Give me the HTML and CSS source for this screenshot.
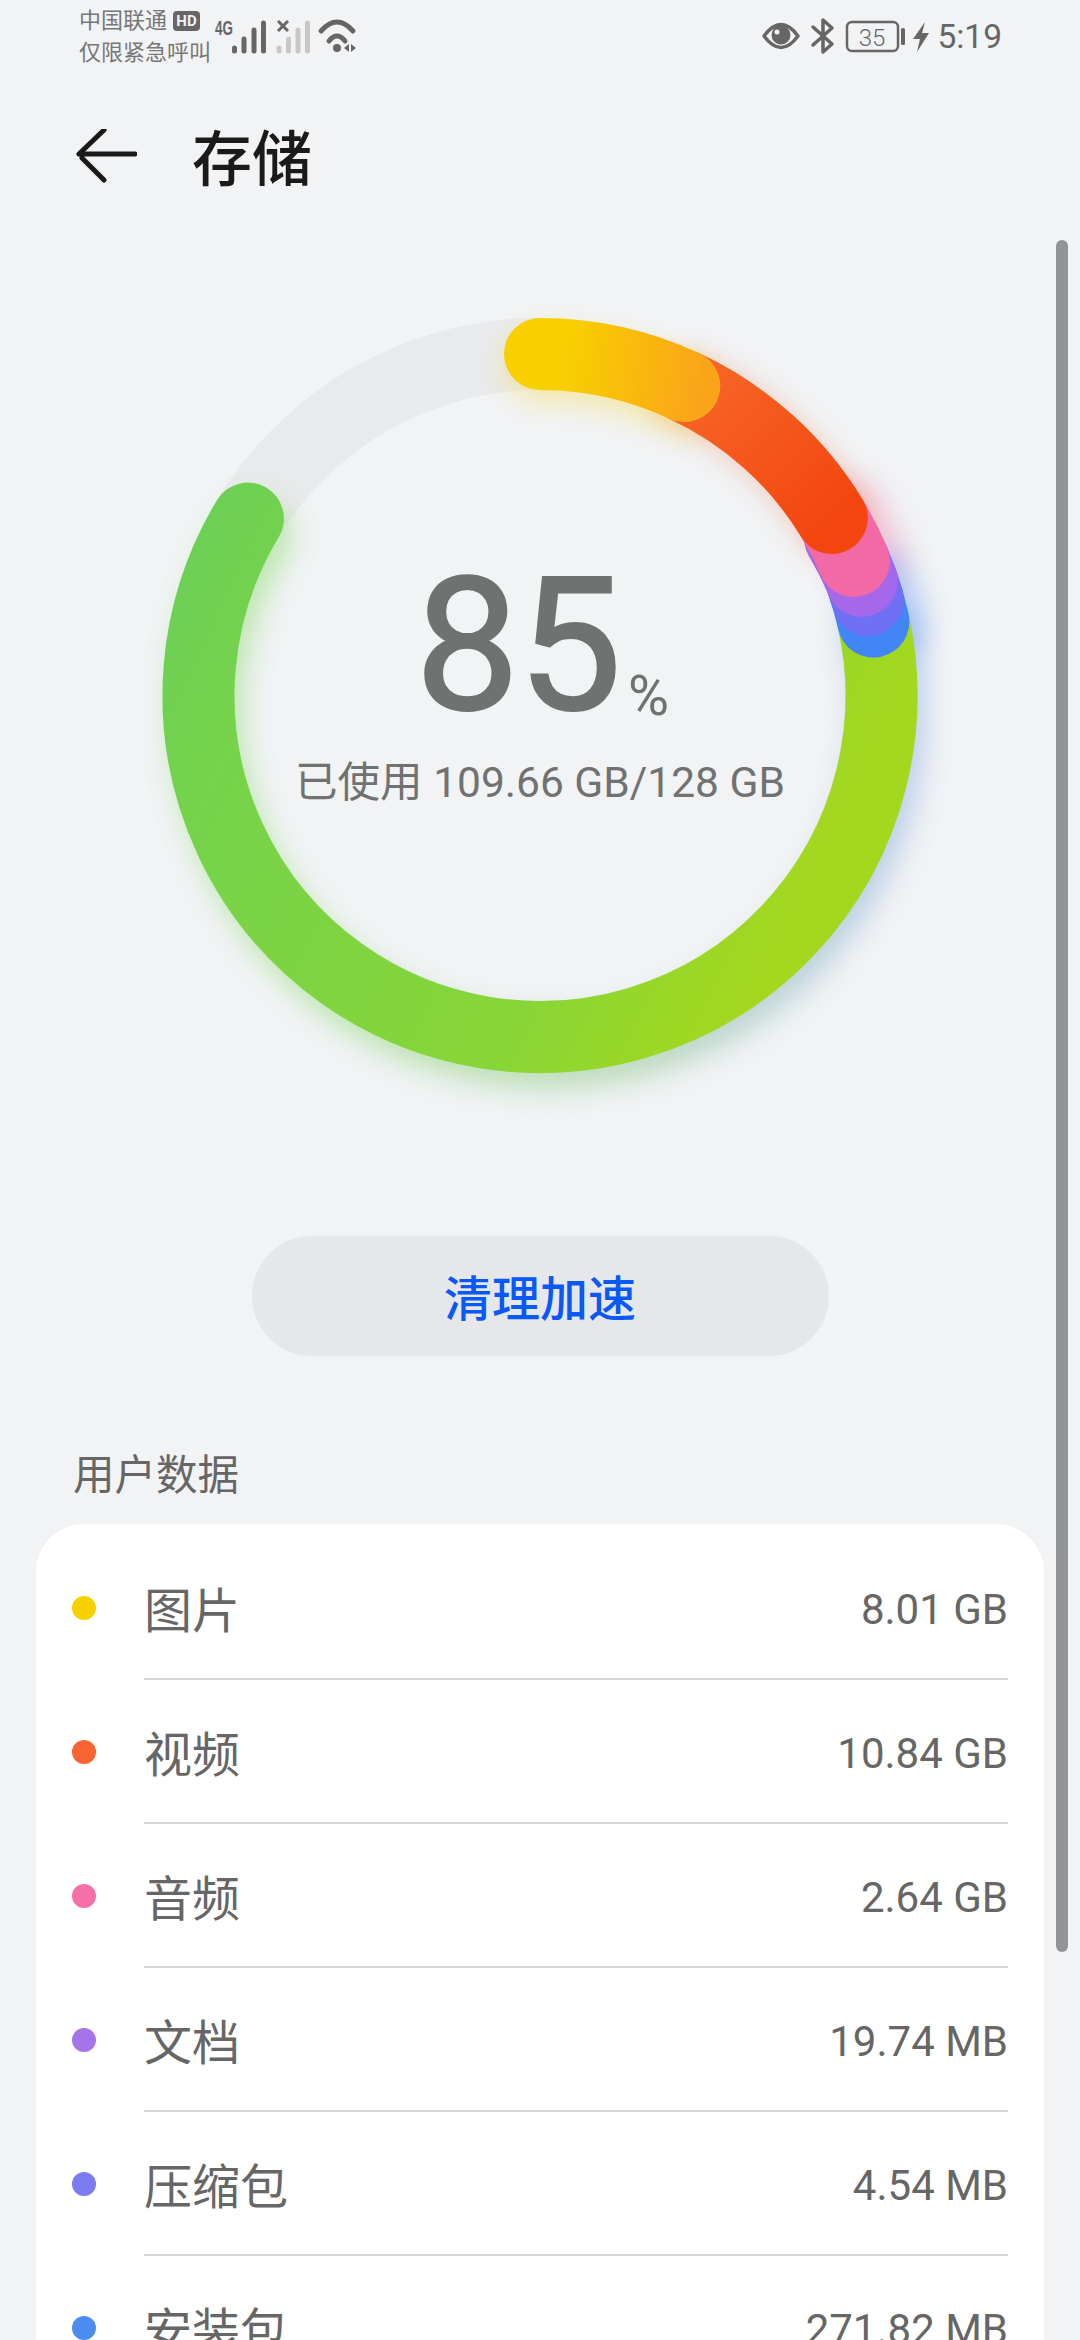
FILE: index.html
```html
<!DOCTYPE html>
<html lang="zh-CN">
<head>
    <meta charset="UTF-8">
    <title>存储</title>
    <link rel="stylesheet" href="styles.css">
</head>
<body>
    <div class="scrollbar"></div>

    <div class="statusbar">
        <div class="carrier">
            <div class="carrier-line">中国联通<span class="hd">HD</span></div>
            <div class="carrier-line">仅限紧急呼叫</div>
        </div>
        <svg class="signal" viewBox="212 0 148 72" width="148" height="72">
            <text class="net" x="215" y="35" textLength="18" lengthAdjust="spacingAndGlyphs">4G</text>
            <g class="bars">
                <path d="M234.500 48v3M244 39v12M254 30v21M263.500 23v28"/>
            </g>
            <g class="bars off">
                <path d="M279 48v3M288.500 39v12M298 30v21M307.500 23v28"/>
            </g>
            <path class="xmark" d="M278 21l10 10M288 21l-10 10"/>
            <g class="wifi">
                <path d="M321 31Q337 13 353 31"/>
                <path d="M329 41Q337 31 345 41"/>
            </g>
            <circle class="fill" cx="337" cy="48" r="4"/>
            <path class="fill" d="M349 44v8l-5-4zM351 44l5 4-5 4z"/>
        </svg>
        <div class="status-right">
            <svg class="status-icons" viewBox="760 0 175 72" width="175" height="72">
                <path class="line" d="M766 36Q783 13 800 36Q783 59 766 36Z"/>
                <circle class="fill" cx="783" cy="35" r="9.500"/>
                <circle class="hole" cx="779" cy="32" r="2.500"/>
                <path class="line" d="M815 27L834 44L825 52V20L834 28L815 45"/>
                <rect class="battery" x="849" y="22" width="51" height="29" rx="5"/>
                <text class="battery-text" x="874" y="46">35</text>
                <rect class="fill" x="903" y="28" width="4" height="17" rx="1.500"/>
                <path class="fill" d="M927 22L915 39H922L919 52L931 33H924Z"/>
            </svg>
            <span class="time">5:19</span>
        </div>
    </div>

    <div class="header">
        <svg class="back" viewBox="0 0 64 60" width="64" height="60">
            <path d="M6 25H62M31 1L6 25M31 51L9 29"/>
        </svg>
        <h1 class="title">存储</h1>
    </div>

    <div class="ring">
        <svg class="ring-chart" viewBox="0 0 1080 900" width="1080" height="900">
            <defs>
                <linearGradient id="gradYellow" gradientUnits="userSpaceOnUse" x1="560" y1="130" x2="700" y2="150">
                    <stop offset="0" stop-color="#f8d000"/>
                    <stop offset="1" stop-color="#faa519"/>
                </linearGradient>
                <linearGradient id="gradRed" gradientUnits="userSpaceOnUse" x1="690" y1="140" x2="830" y2="290">
                    <stop offset="0" stop-color="#f76626"/>
                    <stop offset="1" stop-color="#f3450e"/>
                </linearGradient>
                <linearGradient id="gradGreen" gradientUnits="userSpaceOnUse" x1="880" y1="500" x2="250" y2="200">
                    <stop offset="0" stop-color="#a4d81f"/>
                    <stop offset="0.14" stop-color="#98d728"/>
                    <stop offset="0.3" stop-color="#88d537"/>
                    <stop offset="0.85" stop-color="#75d34a"/>
                    <stop offset="1" stop-color="#6dd055"/>
                </linearGradient>
                <linearGradient id="gradGlow" gradientUnits="userSpaceOnUse" x1="300" y1="0" x2="900" y2="0">
                    <stop offset="0" stop-color="#6fd345"/>
                    <stop offset="0.55" stop-color="#6fb86a"/>
                    <stop offset="1" stop-color="#6f98e0"/>
                </linearGradient>
                <filter id="blur" filterUnits="userSpaceOnUse" x="0" y="0" width="1080" height="900">
                    <feGaussianBlur stdDeviation="14"/>
                </filter>
            </defs>

            <circle class="track" cx="540" cy="455.5" r="341.5"/>

            <!-- glows go first so they only tint the page, not the other segments -->
            <path class="glow glow-pink" d="M831.8 278.1A341.5 341.5 0 0 1 853.9 321"/>
            <path class="glow glow-blue" d="M861.7 340.9A341.5 341.5 0 0 1 873.4 381.6"/>
            <path class="glow glow-green" d="M873.4 381.6A341.5 341.5 0 1 1 247.9 278.6"/>
            <path class="glow glow-red" d="M684.3 146A341.5 341.5 0 0 1 831.8 278.1"/>
            <path class="glow glow-yellow" d="M540 114A341.5 341.5 0 0 1 684.3 146"/>

            <!-- segments are painted from last to first so each round cap covers the next -->
            <path class="seg seg-green" d="M873.4 381.6A341.5 341.5 0 1 1 247.9 278.6"/>
            <path class="seg seg-blue" d="M861.7 340.9A341.5 341.5 0 0 1 873.4 381.6"/>
            <path class="seg seg-indigo" d="M853.9 321A341.5 341.5 0 0 1 867.9 360.2"/>
            <path class="seg seg-purple" d="M840 298A341.5 341.5 0 0 1 861.7 340.9"/>
            <path class="seg seg-pink" d="M831.8 278.1A341.5 341.5 0 0 1 853.9 321"/>
            <path class="seg seg-red" d="M684.3 146A341.5 341.5 0 0 1 831.8 278.1"/>
            <path class="seg seg-yellow" d="M540 114A341.5 341.5 0 0 1 684.3 146"/>
        </svg>
        <div class="ring-label">
            <div class="percent"><span class="percent-num">85</span><span class="percent-sign">%</span></div>
            <div class="used">已使用 109.66 GB/128 GB</div>
        </div>
    </div>

    <button class="clean-btn">清理加速</button>

    <div class="section-title">用户数据</div>

    <div class="card">
        <div class="row">
            <span class="dot dot-photo"></span>
            <div class="row-body"><span class="row-name">图片</span><span class="row-size">8.01 GB</span></div>
        </div>
        <div class="row">
            <span class="dot dot-video"></span>
            <div class="row-body"><span class="row-name">视频</span><span class="row-size">10.84 GB</span></div>
        </div>
        <div class="row">
            <span class="dot dot-audio"></span>
            <div class="row-body"><span class="row-name">音频</span><span class="row-size">2.64 GB</span></div>
        </div>
        <div class="row">
            <span class="dot dot-doc"></span>
            <div class="row-body"><span class="row-name">文档</span><span class="row-size">19.74 MB</span></div>
        </div>
        <div class="row">
            <span class="dot dot-zip"></span>
            <div class="row-body"><span class="row-name">压缩包</span><span class="row-size">4.54 MB</span></div>
        </div>
        <div class="row">
            <span class="dot dot-apk"></span>
            <div class="row-body"><span class="row-name">安装包</span><span class="row-size">271.82 MB</span></div>
        </div>
    </div>
</body>
</html>
```
FILE: styles.css
```css
html, body {
    margin: 0;
    padding: 0;
    height: 2340px;
    overflow: hidden;
}

body {
    position: relative;
    font-family: Roboto, "Noto Sans CJK SC", sans-serif;
    background-color: #f1f3f5;
}

.scrollbar {
    position: absolute;
    left: 1056px;
    top: 240px;
    width: 12px;
    height: 1712px;
    border-radius: 6px;
    background-color: #939495;
}

/* status bar */
.statusbar {
    display: flex;
    height: 72px;
    padding-left: 79px;
    padding-right: 78px;
}

.carrier {
    width: 133px;
    padding-top: 5px;
    font-size: 22px;
    line-height: 32px;
    color: #777;
}

.carrier-line {
    display: flex;
    align-items: center;
    white-space: nowrap;
}

.hd {
    width: 27px;
    height: 20px;
    margin-left: 6px;
    border-radius: 4px;
    background-color: #666;
    color: #f1f3f5;
    font-size: 15px;
    font-weight: 700;
    line-height: 20px;
    text-align: center;
}

.net {
    font-family: "Liberation Sans Narrow", "Liberation Sans", sans-serif;
    font-size: 21px;
    font-weight: 700;
    fill: #666;
}

.bars path {
    fill: none;
    stroke: #666;
    stroke-width: 5px;
    stroke-linecap: round;
}

.bars.off path {
    stroke: #c8c8c8;
}

.xmark {
    fill: none;
    stroke: #666;
    stroke-width: 3px;
}

.wifi path {
    fill: none;
    stroke: #666;
    stroke-width: 5px;
    stroke-linecap: round;
}

.fill {
    fill: #666;
}

.hole {
    fill: #f1f3f5;
}

.line {
    fill: none;
    stroke: #666;
    stroke-width: 3.5px;
    stroke-linejoin: round;
    stroke-linecap: round;
}

.battery {
    fill: none;
    stroke: #666;
    stroke-width: 2.5px;
}

.battery-text {
    font-size: 24px;
    font-weight: 300;
    fill: #666;
    text-anchor: middle;
}

.status-right {
    display: flex;
    align-items: flex-start;
    margin-left: auto;
}

.time {
    margin-left: 4px;
    font-size: 33.5px;
    line-height: 74px;
    color: #666;
}

/* header */
.header {
    display: flex;
    align-items: center;
    height: 168px;
    padding-left: 73px;
}

.back {
    margin-top: 5px;
}

.back path {
    fill: none;
    stroke: #1a1a1a;
    stroke-width: 5px;
    stroke-linecap: round;
}

.title {
    margin: 0 0 3px 55px;
    font-size: 60px;
    font-weight: 500;
    color: #1a1a1a;
}

/* ring chart */
.ring {
    display: grid;
    height: 900px;
    margin-bottom: 96px;
}

.ring-chart,
.ring-label {
    grid-area: 1 / 1;
}

.track {
    fill: none;
    stroke: #e9eaec;
    stroke-width: 72px;
}

.seg,
.glow {
    fill: none;
    stroke-width: 72px;
    stroke-linecap: round;
}

.seg-green { stroke: url(#gradGreen); }
.seg-blue { stroke: #4285f4; }
.seg-indigo { stroke: #7070f5; }
.seg-purple { stroke: #a568ea; }
.seg-pink { stroke: #f26aa5; }
.seg-red { stroke: url(#gradRed); }
.seg-yellow { stroke: url(#gradYellow); }

.glow {
    filter: url(#blur);
}

.glow-green {
    stroke: url(#gradGlow);
    opacity: 0.4;
    transform: translate(8px, 16px);
}

.glow-blue {
    stroke: #4285f4;
    opacity: 0.35;
    transform: translate(16px, 6px);
}

.glow-pink {
    stroke: #f26aa5;
    opacity: 0.3;
    transform: translate(16px, -4px);
}

.glow-red {
    stroke: #f3500f;
    opacity: 0.25;
    transform: translate(3px, 4px);
}

.glow-yellow {
    stroke: #f8d000;
    opacity: 0.3;
    transform: translate(0, 12px);
}

.ring-label {
    display: flex;
    flex-direction: column;
    align-items: center;
    padding-top: 312px;
}

.percent {
    display: flex;
    align-items: flex-end;
    padding-left: 4px;
    color: #707272;
}

/* between Roboto regular and medium, the installed font has no such weight */
.percent-num {
    font-size: 186px;
    line-height: 186px;
    letter-spacing: -2px;
    -webkit-text-stroke: 2px #707272;
}

.percent-sign {
    margin-left: 8px;
    font-size: 56px;
    line-height: 84px;
}

.used {
    margin-top: 15px;
    font-size: 42.5px;
    line-height: 60px;
    color: #707272;
    white-space: nowrap;
}

/* button and list */
.clean-btn {
    display: block;
    width: 577px;
    height: 120px;
    margin: 0 auto;
    padding-bottom: 3px;
    border: none;
    border-radius: 60px;
    background-color: #e6e7e9;
    color: #0a59f7;
    font-family: inherit;
    font-size: 48px;
    font-weight: 500;
}

.section-title {
    margin: 90px 0 18px 73px;
    font-size: 41.5px;
    line-height: 60px;
    color: #666;
}

.card {
    margin: 0 36px;
    padding-top: 12px;
    border-radius: 48px;
    background-color: #fff;
}

.row {
    display: flex;
    align-items: center;
    height: 144px;
    padding: 0 36px;
}

.dot {
    flex: none;
    width: 24px;
    height: 24px;
    margin-right: 48px;
    border-radius: 50%;
}

.dot-photo { background-color: #f8d000; }
.dot-video { background-color: #f86432; }
.dot-audio { background-color: #f56fa8; }
.dot-doc { background-color: #a474e8; }
.dot-zip { background-color: #7d7bf0; }
.dot-apk { background-color: #4b8cf0; }

.row-body {
    flex: 1;
    display: flex;
    align-items: center;
    justify-content: space-between;
    box-sizing: border-box;
    height: 144px;
    border-bottom: 2px solid #d6d6d6;
}

.row-name {
    font-size: 48px;
    color: #666;
}

.row-size {
    padding-top: 4px;
    font-size: 42px;
    color: #666;
}
```
